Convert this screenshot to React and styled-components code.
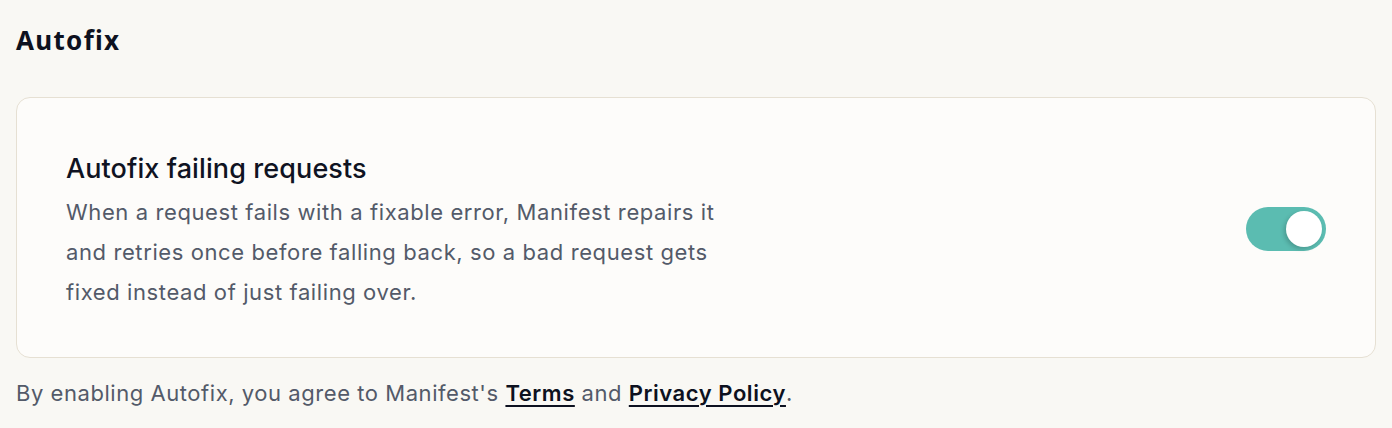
import React, { useState } from "react";
import styled, { createGlobalStyle } from "styled-components";

const Global = createGlobalStyle`
  html, body { margin: 0; padding: 0; background: #f9f8f4; }
  body { font-family: Inter, "Noto Sans", sans-serif; -webkit-font-smoothing: antialiased; }
  * { box-sizing: border-box; }
`;

const Page = styled.div`
  padding: 22px 16px 0 16px;
  display: flex;
  flex-direction: column;
`;

const Heading = styled.h2`
  margin: 0 0 39px 0;
  font-family: "Noto Sans", sans-serif;
  font-weight: 700;
  font-size: 26px;
  line-height: 36px;
  letter-spacing: 1.3px;
  color: #0d1120;
`;

const Card = styled.div`
  background: #fdfcfa;
  border: 1.5px solid #e6e0d3;
  border-radius: 14px;
  padding: 48px 49px 45px 49px;
  display: flex;
  align-items: center;
  justify-content: space-between;
  gap: 24px;
`;

const Text = styled.div`
  display: flex;
  flex-direction: column;
  gap: 3px;
  padding-top: 3px;
`;

const Title = styled.div`
  font-size: 27px;
  line-height: 40px;
  font-weight: 500;
  color: #0f1322;
  letter-spacing: 0.1px;
`;

const Desc = styled.div`
  font-size: 22px;
  line-height: 40px;
  color: #535a69;
  max-width: 680px;
  letter-spacing: 0.6px;
`;

const Switch = styled.button`
  width: 80px;
  height: 44px;
  border-radius: 22px;
  border: none;
  padding: 4px;
  background: ${(p) => (p.$on ? "#5bbcb1" : "#d6d3cc")};
  display: flex;
  justify-content: ${(p) => (p.$on ? "flex-end" : "flex-start")};
  align-items: center;
  cursor: pointer;
  flex-shrink: 0;
`;

const Knob = styled.span`
  width: 36px;
  height: 36px;
  border-radius: 50%;
  background: #ffffff;
  box-shadow: -2px 2px 4px rgba(0, 0, 0, 0.18);
`;

const Footer = styled.p`
  margin: 19px 0 0 0;
  font-size: 22px;
  line-height: 32px;
  color: #535a69;
  letter-spacing: 0.55px;
`;

const Link = styled.a`
  color: #0d1120;
  font-weight: 600;
  text-decoration: underline;
  text-decoration-thickness: 2px;
  text-underline-offset: 4px;
`;

export default function App() {
  const [on, setOn] = useState(true);
  return (
    <>
      <Global />
      <Page>
        <Heading>Autofix</Heading>
        <Card>
          <Text>
            <Title>Autofix failing requests</Title>
            <Desc>
              When a request fails with a fixable error, Manifest repairs it and
              retries once before falling back, so a bad request gets fixed
              instead of just failing over.
            </Desc>
          </Text>
          <Switch $on={on} onClick={() => setOn(!on)} aria-label="Toggle autofix">
            <Knob />
          </Switch>
        </Card>
        <Footer>
          By enabling Autofix, you agree to Manifest's <Link href="#">Terms</Link>{" "}
          and <Link href="#">Privacy Policy</Link>.
        </Footer>
      </Page>
    </>
  );
}
